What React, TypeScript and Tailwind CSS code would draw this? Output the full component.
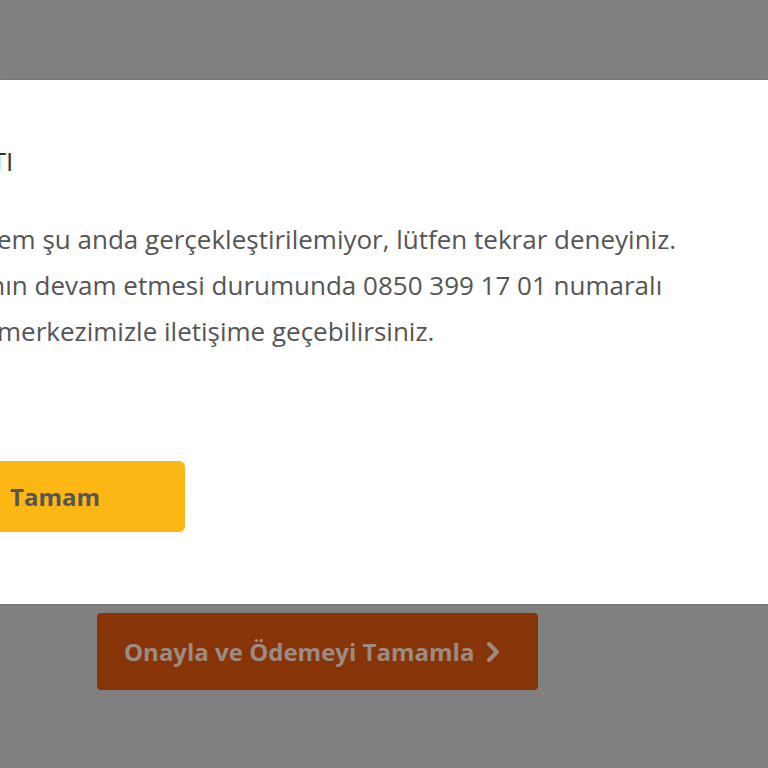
import { ChevronRight } from "lucide-react";

const font = { fontFamily: '"Open Sans", "Liberation Sans", sans-serif' };

function ErrorModal() {
  return (
    <div className="absolute inset-x-0 top-[80px] h-[524px] bg-white shadow-[0_0_2px_rgba(0,0,0,0.25)]">
      <div className="-ml-[68px] flex flex-col items-start pt-[63px]">
        <h2 className="-ml-[42px] text-[26px] leading-[36px] font-normal text-[#333]">BAĞLANTI</h2>
        <p className="mt-[37px] whitespace-nowrap text-[26px] leading-[46px] text-[#555]">
          Bu işlem şu anda gerçekleştirilemiyor, lütfen tekrar deneyiniz.
          <br />
          Hatanın devam etmesi durumunda 0850 399 17 01 numaralı
          <br />
          çağrı merkezimizle iletişime geçebilirsiniz.
        </p>
        <button className="mt-[107px] flex h-[71px] w-[253px] items-center rounded-[6px] bg-[#fdb714] pl-[78px] text-[24px] font-bold text-[#555]">
          Tamam
        </button>
      </div>
    </div>
  );
}

export default function App() {
  return (
    <div className="relative h-[768px] w-full overflow-hidden bg-[#808080]" style={font}>
      <div className="pl-[97px] pt-[613px]">
        <button className="flex h-[77px] w-[441px] items-center gap-[3px] rounded-[4px] bg-[#873508] pl-[27px] text-[24px] font-bold text-[#9c8b82]">
          Onayla ve Ödemeyi Tamamla
          <ChevronRight size={32} strokeWidth={3} />
        </button>
      </div>
      <ErrorModal />
    </div>
  );
}
